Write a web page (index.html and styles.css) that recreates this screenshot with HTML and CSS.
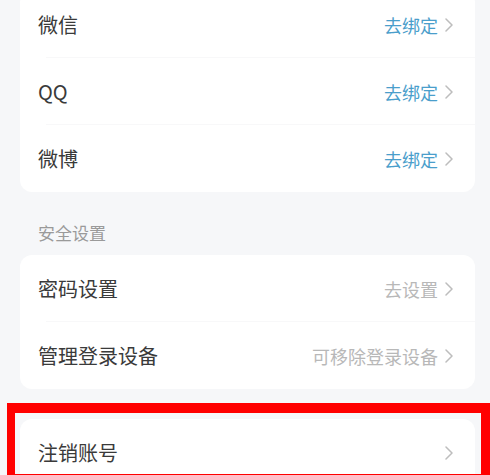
FILE: index.html
```html
<!DOCTYPE html>
<html lang="zh-CN">
<head>
<meta charset="utf-8">
<title>账号与安全</title>
<link rel="stylesheet" href="styles.css">
</head>
<body>
<div class="page">
  <div class="card card-first">
    <div class="row">
      <span class="label">微信</span>
      <span class="action"><span class="value value-blue">去绑定</span><svg class="chev" viewBox="0 0 8 14" width="8" height="14"><polyline points="1,1 7,7 1,13"/></svg></span>
    </div>
    <div class="sep"></div>
    <div class="row">
      <span class="label">QQ</span>
      <span class="action"><span class="value value-blue">去绑定</span><svg class="chev" viewBox="0 0 8 14" width="8" height="14"><polyline points="1,1 7,7 1,13"/></svg></span>
    </div>
    <div class="sep"></div>
    <div class="row">
      <span class="label">微博</span>
      <span class="action"><span class="value value-blue">去绑定</span><svg class="chev" viewBox="0 0 8 14" width="8" height="14"><polyline points="1,1 7,7 1,13"/></svg></span>
    </div>
  </div>

  <div class="section-title">安全设置</div>

  <div class="card">
    <div class="row">
      <span class="label">密码设置</span>
      <span class="action"><span class="value">去设置</span><svg class="chev" viewBox="0 0 8 14" width="8" height="14"><polyline points="1,1 7,7 1,13"/></svg></span>
    </div>
    <div class="sep"></div>
    <div class="row">
      <span class="label">管理登录设备</span>
      <span class="action"><span class="value">可移除登录设备</span><svg class="chev" viewBox="0 0 8 14" width="8" height="14"><polyline points="1,1 7,7 1,13"/></svg></span>
    </div>
  </div>

  <div class="card card-last">
    <div class="row">
      <span class="label">注销账号</span>
      <span class="action"><svg class="chev" viewBox="0 0 8 14" width="8" height="14"><polyline points="1,1 7,7 1,13"/></svg></span>
    </div>
  </div>

  <div class="highlight"></div>
</div>
</body>
</html>
```

FILE: styles.css
```css
html, body {
  margin: 0;
  padding: 0;
  background: #f6f7f9;
  overflow: hidden;
}
body {
  width: 490px;
  height: 475px;
  font-family: "Noto Sans CJK SC", "Noto Sans", sans-serif;
}
.page {
  position: relative;
  height: 475px;
  overflow: hidden;
  display: flex;
  flex-direction: column;
}
.card {
  background: #ffffff;
  border-radius: 12px;
  margin: 0 15px 0 20px;
  display: flex;
  flex-direction: column;
  flex-shrink: 0;
}
.card-first {
  margin-top: -9px;
}
.card-last {
  margin-top: 30px;
}
.row {
  height: 67px;
  display: flex;
  align-items: center;
  justify-content: space-between;
  padding: 0 22px 0 18px;
}
.sep {
  height: 1px;
  margin: -1px 0 0 26px;
  background: #f8f8f9;
}
.label {
  font-size: 20px;
  color: #3a3a3a;
  line-height: 24px;
}
.action {
  display: flex;
  align-items: center;
  gap: 7px;
}
.value {
  font-size: 18px;
  line-height: 22px;
  color: #b8b8b8;
}
.value-blue {
  color: #4a9ecb;
}
.chev {
  display: block;
  fill: none;
  stroke: #bdbdbd;
  stroke-width: 1.5;
  stroke-linecap: round;
  stroke-linejoin: round;
}
.section-title {
  font-size: 17px;
  line-height: 24px;
  color: #9a9a9a;
  padding: 29px 0 10px 38px;
  flex-shrink: 0;
}
.highlight {
  position: absolute;
  left: 7px;
  top: 403px;
  width: 483px;
  height: 80px;
  box-sizing: border-box;
  border: 9px solid #ff0000;
  border-top-width: 10px;
  border-left-width: 8px;
}
```
